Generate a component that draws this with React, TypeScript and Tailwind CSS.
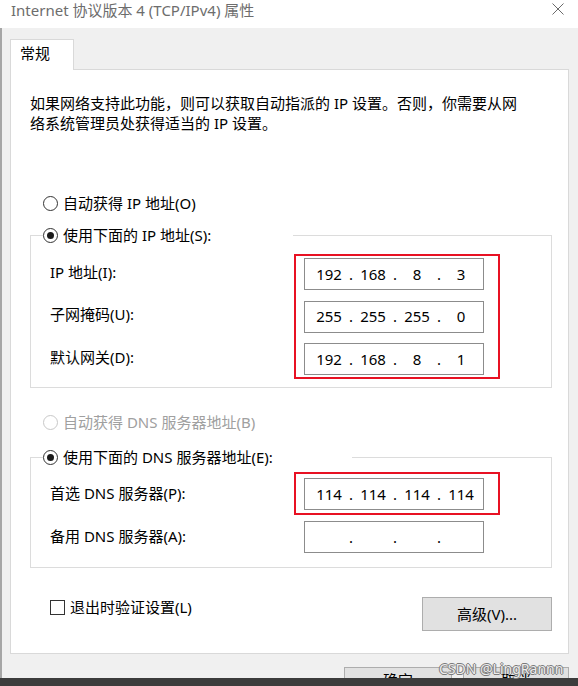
import React from 'react';

const Radio: React.FC<{ label: string; checked?: boolean; disabled?: boolean }> = ({ label, checked, disabled }) => (
  <div className="flex h-[20px] items-center leading-[20px]">
    <span
      className={`flex h-[15px] w-[15px] shrink-0 items-center justify-center rounded-full border bg-white ${
        disabled ? 'border-[#c8c8c8]' : 'border-[#333333]'
      }`}
    >
      {checked && <span className="h-[7px] w-[7px] rounded-full bg-[#1a1a1a]" />}
    </span>
    <span className={`ml-[5px] whitespace-nowrap ${disabled ? 'text-[#a0a0a0]' : 'text-black'}`}>{label}</span>
  </div>
);

const IpBox: React.FC<{ parts: string[] }> = ({ parts }) => (
  <div className="flex h-[32px] w-[180px] items-center border border-[#8c8c8c] bg-white pb-[1px] pl-[6px] text-[15px] leading-[20px]">
    {parts.map((p, i) => (
      <React.Fragment key={i}>
        {i > 0 && <span className="w-[8px] text-center">.</span>}
        <span className="w-[36px] text-center">{p}</span>
      </React.Fragment>
    ))}
  </div>
);

const Label: React.FC<{ text: string }> = ({ text }) => (
  <div className="flex h-[32px] items-center whitespace-nowrap">{text}</div>
);

export default function App() {
  return (
    <div className="relative flex h-[686px] w-[578px] flex-col overflow-hidden bg-[#f0f0f0] font-['Noto_Sans','Noto_Sans_CJK_SC',sans-serif] text-[15px] text-black">
      {/* title bar */}
      <div className="flex h-[28px] shrink-0 items-start justify-between bg-white pl-[11px] pr-[14px]">
        <span className="leading-[20px] text-[#6d6d6d]">Internet 协议版本 4 (TCP/IPv4) 属性</span>
        <svg className="mt-[3px]" width="12" height="12" viewBox="0 0 12 12">
          <path d="M0.5 0.5 L11.5 11.5 M11.5 0.5 L0.5 11.5" stroke="#6b6b6b" strokeWidth="1" fill="none" />
        </svg>
      </div>

      <div className="flex flex-1 flex-col border-l-2 border-[#a6a6a6] pl-[8px] pr-[9px]">
        {/* tabs */}
        <div className="mt-[11px] flex h-[31px]">
          <div className="w-[64px] border-x border-t border-[#d9d9d9] bg-white pl-[9px] pt-[3px] leading-[20px]">常规</div>
          <div className="flex-1 border-b border-[#d9d9d9]" />
        </div>

        {/* panel */}
        <div className="flex flex-col border-x border-b border-[#d9d9d9] bg-white pb-[22px] pl-[19px] pt-[23px]">
          <p className="leading-[20px]">
            如果网络支持此功能，则可以获取自动指派的 IP 设置。否则，你需要从网
            <br />
            络系统管理员处获得适当的 IP 设置。
          </p>

          <div className="ml-[13px] mt-[60px]">
            <Radio label="自动获得 IP 地址(O)" />
          </div>

          <fieldset className="mt-[12px] w-[522px] border border-[#dcdcdc] pb-[8px]">
            <legend className="ml-[12px] w-[250px]">
              <Radio label="使用下面的 IP 地址(S):" checked />
            </legend>
            <div className="mt-[9px] flex">
              <div className="flex w-[263px] flex-col gap-[10.5px] pl-[19px] pt-[2px]">
                <Label text="IP 地址(I):" />
                <Label text="子网掩码(U):" />
                <Label text="默认网关(D):" />
              </div>
              <div className="flex flex-col gap-[10.5px] border-2 border-[#e81123] py-[2px] pl-[8px] pr-[14px]">
                <IpBox parts={['192', '168', '8', '3']} />
                <IpBox parts={['255', '255', '255', '0']} />
                <IpBox parts={['192', '168', '8', '1']} />
              </div>
            </div>
          </fieldset>

          <div className="ml-[13px] mt-[24px]">
            <Radio label="自动获得 DNS 服务器地址(B)" disabled />
          </div>

          <fieldset className="mt-[15px] w-[522px] border border-[#dcdcdc] pb-[14px]">
            <legend className="ml-[12px] w-[309px]">
              <Radio label="使用下面的 DNS 服务器地址(E):" checked />
            </legend>
            <div className="mt-[5px] flex">
              <div className="flex w-[263px] flex-col gap-[11px] pl-[19px] pt-[5px]">
                <Label text="首选 DNS 服务器(P):" />
                <Label text="备用 DNS 服务器(A):" />
              </div>
              <div className="flex flex-col">
                <div className="border-2 border-[#e81123] pb-[3px] pl-[8px] pr-[14px] pt-[4px]">
                  <IpBox parts={['114', '114', '114', '114']} />
                </div>
                <div className="ml-[10px] mt-[6px]">
                  <IpBox parts={['', '', '', '']} />
                </div>
              </div>
            </div>
          </fieldset>

          <div className="mr-[16px] mt-[29px] flex items-start justify-between">
            <div className="ml-[20px] flex h-[20px] items-center leading-[20px]">
              <span className="h-[15px] w-[15px] border border-[#333333] bg-white" />
              <span className="ml-[5px]">退出时验证设置(L)</span>
            </div>
            <button className="flex h-[34px] w-[130px] items-center justify-center border border-[#adadad] bg-[#e1e1e1] leading-[20px]">
              高级(V)...
            </button>
          </div>
        </div>

        {/* dialog buttons, cut off by the bar below */}
        <div className="mt-[13px] flex h-[11px] justify-end gap-[11px] overflow-hidden">
          <div className="flex h-[30px] w-[108px] shrink-0 items-end justify-center border border-[#adadad] bg-[#e1e1e1] pb-[6px] leading-[20px]">
            确定
          </div>
          <div className="flex h-[30px] w-[106px] shrink-0 items-end justify-center border border-[#adadad] bg-[#e1e1e1] pb-[6px] leading-[20px]">
            取消
          </div>
        </div>
      </div>

      <div className="h-[8px] shrink-0 bg-[#3c3c3c]" />

      <span className="absolute left-[439px] top-[662px] whitespace-nowrap text-[14px] leading-[14px] text-[#ececec] [text-shadow:1px_0_0_#7a7a7a,-1px_0_0_#7a7a7a,0_1px_0_#7a7a7a,0_-1px_0_#7a7a7a]">
        CSDN @LingRannn
      </span>
    </div>
  );
}
